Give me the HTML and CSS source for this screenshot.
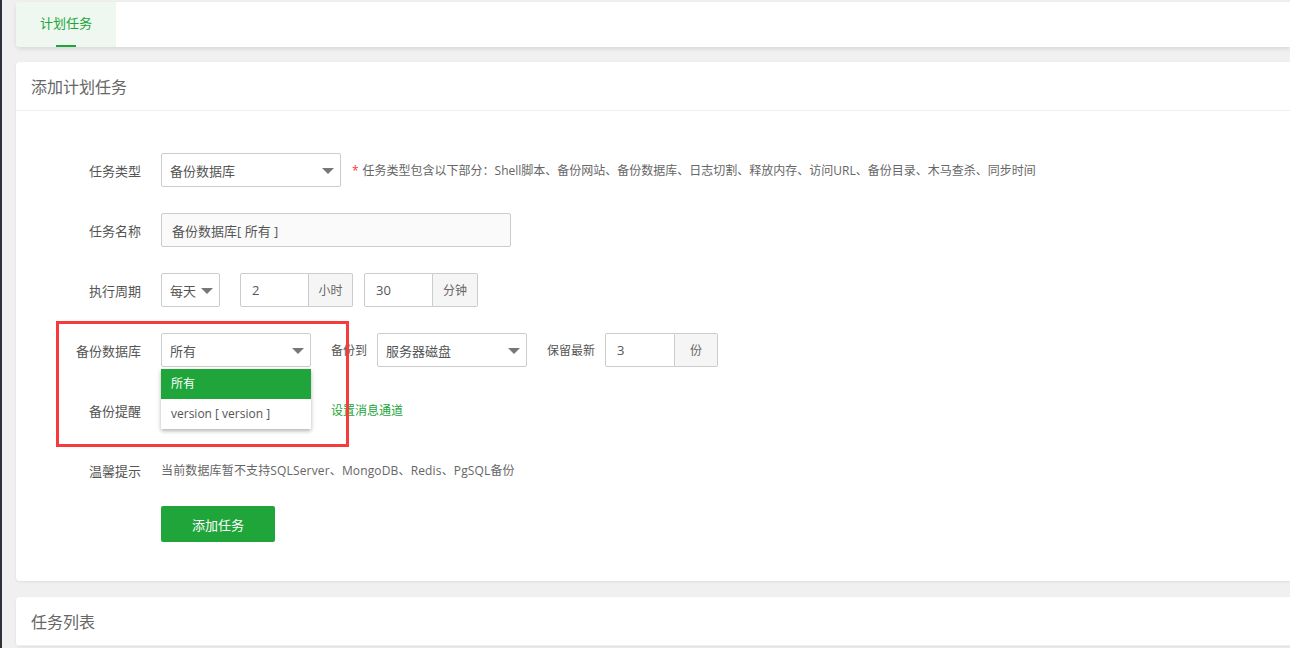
FILE: index.html
```html
<!DOCTYPE html>
<html lang="zh-CN">
<head>
<meta charset="utf-8">
<title>计划任务</title>
<link rel="stylesheet" href="styles.css">
</head>
<body>
<div class="page">
  <div class="card tabs">
    <div class="tab active">计划任务</div>
  </div>

  <div class="card panel">
    <div class="panel-head">添加计划任务</div>
    <div class="form">
      <div class="row">
        <label class="lbl">任务类型</label>
        <div class="select w180"><span>备份数据库</span><i class="caret"></i></div>
        <span class="hint"><em>*</em>任务类型包含以下部分：Shell脚本、备份网站、备份数据库、日志切割、释放内存、访问URL、备份目录、木马查杀、同步时间</span>
      </div>

      <div class="row">
        <label class="lbl">任务名称</label>
        <div class="input w350 grey">备份数据库[ 所有 ]</div>
      </div>

      <div class="row">
        <label class="lbl">执行周期</label>
        <div class="select w59"><span>每天</span><i class="caret"></i></div>
        <div class="group ml20">
          <div class="input w69">2</div><div class="addon w44">小时</div>
        </div>
        <div class="group ml11">
          <div class="input w69">30</div><div class="addon w45">分钟</div>
        </div>
      </div>

      <div class="row">
        <label class="lbl">备份数据库</label>
        <div class="select w150"><span>所有</span><i class="caret"></i></div>
        <span class="sublbl">备份到</span>
        <div class="select w150"><span>服务器磁盘</span><i class="caret"></i></div>
        <span class="sublbl">保留最新</span>
        <div class="group">
          <div class="input w70">3</div><div class="addon w43">份</div>
        </div>
      </div>

      <div class="row">
        <label class="lbl">备份提醒</label>
        <div class="select w150"><i class="caret"></i></div>
        <a class="link">设置消息通道</a>
      </div>

      <div class="row tip-row">
        <label class="lbl">温馨提示</label>
        <span class="tip">当前数据库暂不支持SQLServer、MongoDB、Redis、PgSQL备份</span>
      </div>

      <div class="btn-row">
        <button class="btn">添加任务</button>
      </div>

      <ul class="dropdown">
        <li class="on">所有</li>
        <li>version [ version ]</li>
      </ul>
      <div class="mark"></div>
    </div>
  </div>

  <div class="card panel">
    <div class="panel-head">任务列表</div>
  </div>
</div>
</body>
</html>
```

FILE: styles.css
```css
html, body {
  margin: 0;
  padding: 0;
  height: 100%;
  overflow: hidden;
}
body {
  background: #f0f0f0;
  border-left: 2px solid #2d3138;
  font-family: "Open Sans", "Noto Sans CJK SC", sans-serif;
  color: #555;
  font-size: 13px;
}
.page {
  padding: 2px 0 0 14px;
}
.card {
  background: #fff;
  border-radius: 4px 0 0 4px;
  box-shadow: 0 1px 3px rgba(0,0,0,0.08);
}
.tabs {
  height: 45px;
  display: flex;
  box-shadow: 0 2px 4px rgba(0,0,0,0.1);
}
.tab {
  width: 100px;
  height: 45px;
  line-height: 43px;
  text-align: center;
  color: #20a53a;
  font-size: 13px;
  position: relative;
  border-radius: 4px 0 0 4px;
}
.tab.active {
  background: #eef8f0;
}
.tab.active::after {
  content: "";
  position: absolute;
  left: 40px;
  bottom: 0;
  width: 20px;
  height: 2px;
  background: #20a53a;
}
.panel {
  margin-top: 15px;
}
.panel + .panel {
  margin-top: 16px;
}
.panel-head {
  height: 48px;
  line-height: 50px;
  border-bottom: 1px solid #eee;
  padding-left: 15px;
  font-size: 16px;
  color: #666;
}
.form {
  position: relative;
  padding: 42px 0 39px 0;
}
.row {
  display: flex;
  align-items: center;
  height: 34px;
  margin-bottom: 26px;
}
.row.tip-row {
  margin-bottom: 19px;
}
.lbl {
  width: 125px;
  text-align: right;
  margin-right: 20px;
  font-size: 13px;
  color: #555;
  flex: none;
}
.select {
  box-sizing: border-box;
  height: 34px;
  border: 1px solid #ccc;
  border-radius: 2px;
  display: flex;
  align-items: center;
  padding-left: 8px;
  position: relative;
  font-size: 13px;
  color: #555;
  background: #fff;
  flex: none;
}
.caret {
  position: absolute;
  right: 6px;
  top: 14px;
  width: 0;
  height: 0;
  border-left: 6px solid transparent;
  border-right: 6px solid transparent;
  border-top: 6px solid #777;
}
.w180 { width: 180px; }
.w150 { width: 150px; }
.w59 { width: 59px; }
.w350 { width: 350px; }
.w69 { width: 69px; }
.w70 { width: 70px; }
.w44 { width: 44px; }
.w45 { width: 45px; }
.w43 { width: 43px; }
.ml20 { margin-left: 20px; }
.ml11 { margin-left: 11px; }
.input {
  box-sizing: border-box;
  height: 34px;
  border: 1px solid #ccc;
  border-radius: 2px;
  display: flex;
  align-items: center;
  padding-left: 11px;
  font-size: 13px;
  color: #555;
  background: #fff;
  flex: none;
}
.input.grey {
  background: #fafafa;
  padding-left: 10px;
}
.group {
  display: flex;
  flex: none;
}
.group .input {
  border-radius: 2px 0 0 2px;
}
.addon {
  box-sizing: border-box;
  height: 34px;
  border: 1px solid #ccc;
  border-left: none;
  border-radius: 0 2px 2px 0;
  background: #f5f5f5;
  color: #666;
  font-size: 12px;
  display: flex;
  align-items: center;
  justify-content: center;
  flex: none;
}
.hint {
  margin-left: 11px;
  font-size: 12px;
  color: #666;
}
.hint em {
  font-style: normal;
  color: #f33;
  margin-right: 4px;
}
.sublbl {
  font-size: 12px;
  color: #555;
  margin: 0 10px 0 20px;
}
.link {
  margin-left: 20px;
  color: #20a53a;
  font-size: 12px;
}
.tip {
  font-size: 12px;
  color: #666;
  letter-spacing: 0.15px;
}
.btn-row {
  padding-left: 145px;
}
.btn {
  width: 114px;
  height: 36px;
  background: #20a53a;
  border: none;
  border-radius: 2px;
  color: #fff;
  font-family: "Open Sans", "Noto Sans CJK SC", sans-serif;
  font-size: 13px;
  padding: 0;
}
.dropdown {
  position: absolute;
  left: 145px;
  top: 258px;
  width: 150px;
  margin: 0;
  padding: 0;
  list-style: none;
  background: #fff;
  box-shadow: 0 2px 4px rgba(0,0,0,0.3);
  font-size: 12px;
  color: #555;
}
.dropdown li {
  height: 30px;
  line-height: 30px;
  padding-left: 10px;
}
.dropdown li.on {
  background: #20a53a;
  color: #fff;
}
.mark {
  position: absolute;
  left: 40px;
  top: 210px;
  width: 287px;
  height: 120px;
  border: 3px solid #f53b3b;
  pointer-events: none;
}
```
